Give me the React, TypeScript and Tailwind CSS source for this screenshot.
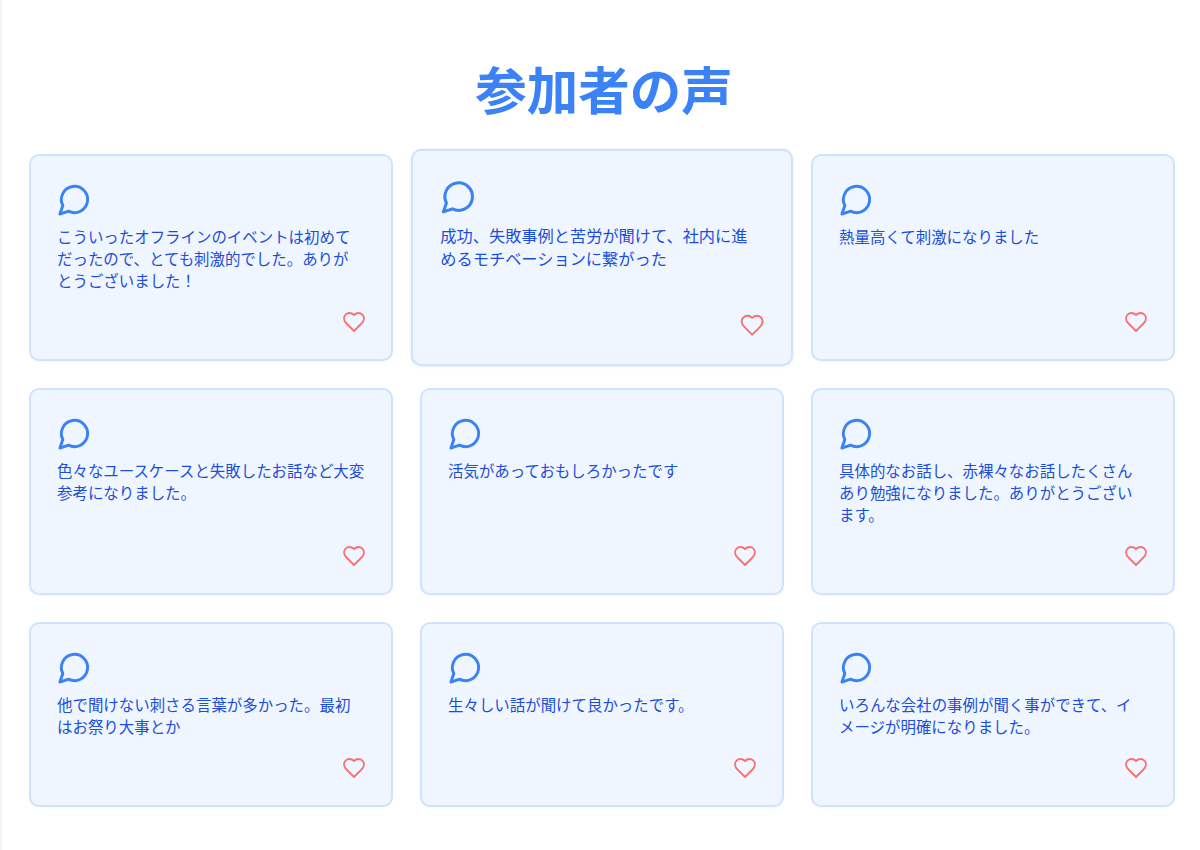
const voices = [
  "こういったオフラインのイベントは初めて\nだったので、とても刺激的でした。ありが\nとうございました！",
  "成功、失敗事例と苦労が聞けて、社内に進\nめるモチベーションに繋がった",
  "熱量高くて刺激になりました",
  "色々なユースケースと失敗したお話など大変\n参考になりました。",
  "活気があっておもしろかったです",
  "具体的なお話し、赤裸々なお話したくさん\nあり勉強になりました。ありがとうござい\nます。",
  "他で聞けない刺さる言葉が多かった。最初\nはお祭り大事とか",
  "生々しい話が聞けて良かったです。",
  "いろんな会社の事例が聞く事ができて、イ\nメージが明確になりました。",
];

function BubbleIcon() {
  return (
    <svg
      viewBox="0 0 24 24"
      fill="none"
      stroke="currentColor"
      strokeWidth="2"
      strokeLinecap="round"
      strokeLinejoin="round"
      className="h-[35px] w-[35px] text-[#3b82f6]"
    >
      <path d="M7.9 20A9 9 0 1 0 4 16.1L2 22Z" />
    </svg>
  );
}

function HeartIcon() {
  return (
    <svg
      viewBox="0 0 24 24"
      fill="none"
      stroke="currentColor"
      strokeWidth="1.8"
      strokeLinecap="round"
      strokeLinejoin="round"
      className="h-6 w-6 text-[#f87171]"
    >
      <path d="M19 14c1.49-1.46 3-3.21 3-5.5A5.5 5.5 0 0 0 16.5 3c-1.76 0-3 .5-4.5 2-1.5-1.5-2.74-2-4.5-2A5.5 5.5 0 0 0 2 8.5c0 2.3 1.5 4.05 3 5.5l7 7Z" />
    </svg>
  );
}

function VoiceCard({ text, featured }: { text: string; featured: boolean }) {
  return (
    <div
      className={`flex flex-col rounded-[10px] border-2 border-[#cfe3fe] bg-[#eff6ff] pt-[26px] pr-[25px] pb-[25px] pl-[26px] shadow-[0_1px_2px_rgba(0,0,0,0.03)] ${
        featured ? "scale-105" : ""
      }`}
    >
      <BubbleIcon />
      <p className="mt-2 text-[15.45px] leading-[22px] whitespace-pre text-[#1d4ed8]">{text}</p>
      <div className="mt-auto flex justify-end pt-[19px]">
        <HeartIcon />
      </div>
    </div>
  );
}

export default function App() {
  return (
    <div
      className="min-h-[850px] border-l-2 border-[#f3f4f6] bg-white pt-[51px] pr-[25px] pl-[27px]"
      style={{ fontFamily: '"Noto Sans CJK JP", "Noto Sans", sans-serif' }}
    >
      <h1 className="pl-[4px] text-center text-[51.5px] leading-[74px] font-bold text-[#3b82f6]">参加者の声</h1>
      <div className="mt-[29px] grid grid-cols-3 gap-[27px]">
        {voices.map((text, index) => (
          <VoiceCard key={index} text={text} featured={index === 1} />
        ))}
      </div>
    </div>
  );
}
